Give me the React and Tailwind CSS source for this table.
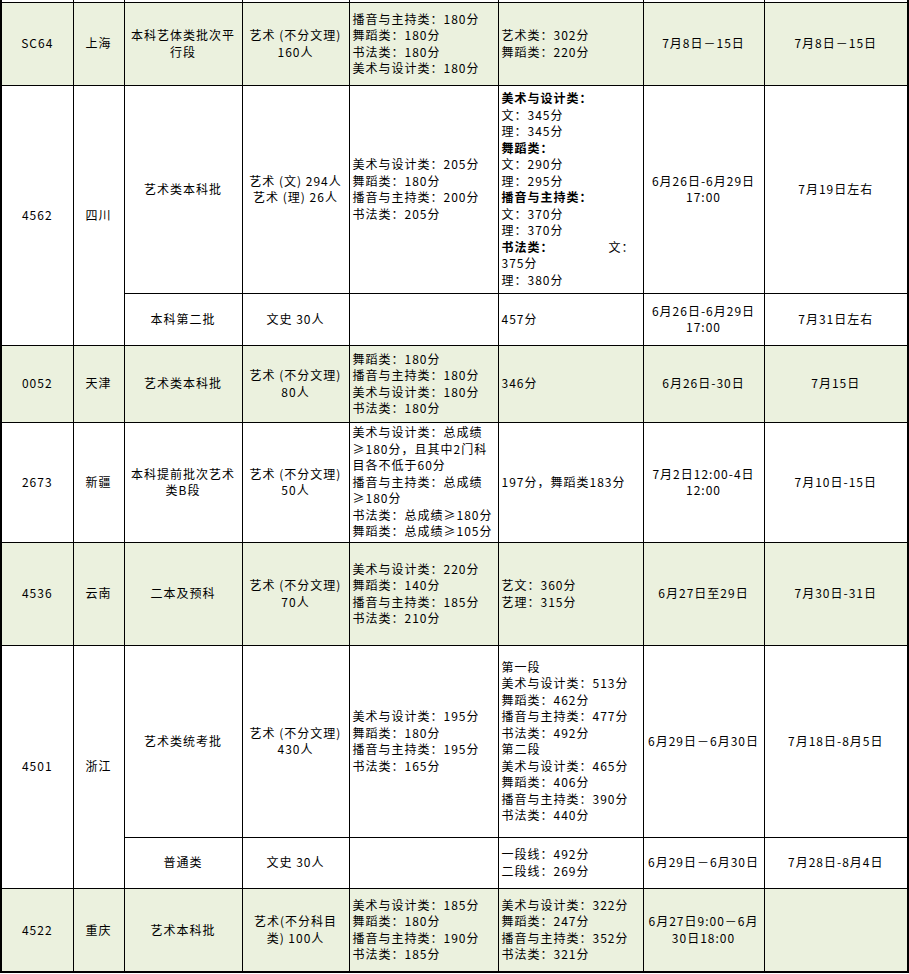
import React from 'react';

const GREEN = 'bg-[#ebf1de]';

const B = ({ children }) => <span className="font-bold">{children}</span>;

function Lines({ items }) {
  return (
    <>
      {items.map((t, i) => (
        <div key={i}>{t}</div>
      ))}
    </>
  );
}

const cell = 'border border-black p-0 overflow-hidden';
const center = `${cell} text-center`;
const left = `${cell} text-left pl-[3px] pr-[2px]`;

export default function App() {
  return (
    <div className="w-[909px] h-[974px] bg-white overflow-hidden font-['Noto_Sans_CJK_SC',sans-serif] text-[12px] leading-[16.5px] tracking-[1px] text-black">
      <table className="table-fixed border-collapse w-[907px]">
        <colgroup>
          <col className="w-[72px]" />
          <col className="w-[51px]" />
          <col className="w-[118px]" />
          <col className="w-[107px]" />
          <col className="w-[149px]" />
          <col className="w-[145px]" />
          <col className="w-[121px]" />
          <col className="w-[144px]" />
        </colgroup>
        <tbody>
          {/* sliver of the row above */}
          <tr className="h-[2px]">
            <td className="border-x border-x-black border-l-2 p-0" />
            <td className="border-x border-black p-0" />
            <td className="border-x border-black p-0" />
            <td className="border-x border-black p-0" />
            <td className="border-x border-black p-0" />
            <td className="border-x border-black p-0" />
            <td className="border-x border-black p-0" />
            <td className="border-x border-black border-r-2 p-0" />
          </tr>

          {/* 上海 */}
          <tr className={`h-[83px] ${GREEN}`}>
            <td className={`${center} border-l-2`}>SC64</td>
            <td className={center}>上海</td>
            <td className={center}>本科艺体类批次平<br />行段</td>
            <td className={center}>艺术 (不分文理)<br />160人</td>
            <td className={left}>
              <Lines items={['播音与主持类：180分', '舞蹈类：180分', '书法类：180分', '美术与设计类：180分']} />
            </td>
            <td className={left}>
              <Lines items={['艺术类：302分', '舞蹈类：220分']} />
            </td>
            <td className={center}>7月8日－15日</td>
            <td className={`${center} border-r-2`}>7月8日－15日</td>
          </tr>

          {/* 四川 */}
          <tr className="h-[208px]">
            <td rowSpan={2} className={`${center} border-l-2`}>4562</td>
            <td rowSpan={2} className={center}>四川</td>
            <td className={center}>艺术类本科批</td>
            <td className={center}>艺术 (文) 294人<br />艺术 (理) 26人</td>
            <td className={left}>
              <Lines items={['美术与设计类：205分', '舞蹈类：180分', '播音与主持类：200分', '书法类：205分']} />
            </td>
            <td className={left}>
              <div><B>美术与设计类：</B></div>
              <div>文：345分</div>
              <div>理：345分</div>
              <div><B>舞蹈类：</B></div>
              <div>文：290分</div>
              <div>理：295分</div>
              <div><B>播音与主持类：</B></div>
              <div>文：370分</div>
              <div>理：370分</div>
              <div className="flex justify-between pr-[6px]">
                <B>书法类：</B>
                <span>文：</span>
              </div>
              <div>375分</div>
              <div>理：380分</div>
            </td>
            <td className={center}>6月26日-6月29日<br />17:00</td>
            <td className={`${center} border-r-2`}>7月19日左右</td>
          </tr>
          <tr className="h-[52px]">
            <td className={center}>本科第二批</td>
            <td className={center}>文史 30人</td>
            <td className={left} />
            <td className={left}>457分</td>
            <td className={center}>6月26日-6月29日<br />17:00</td>
            <td className={`${center} border-r-2`}>7月31日左右</td>
          </tr>

          {/* 天津 */}
          <tr className={`h-[77px] ${GREEN}`}>
            <td className={`${center} border-l-2`}>0052</td>
            <td className={center}>天津</td>
            <td className={center}>艺术类本科批</td>
            <td className={center}>艺术 (不分文理)<br />80人</td>
            <td className={left}>
              <Lines items={['舞蹈类：180分', '播音与主持类：180分', '美术与设计类：180分', '书法类：180分']} />
            </td>
            <td className={left}>346分</td>
            <td className={center}>6月26日-30日</td>
            <td className={`${center} border-r-2`}>7月15日</td>
          </tr>

          {/* 新疆 */}
          <tr className="h-[120px]">
            <td className={`${center} border-l-2`}>2673</td>
            <td className={center}>新疆</td>
            <td className={center}>本科提前批次艺术<br />类B段</td>
            <td className={center}>艺术 (不分文理)<br />50人</td>
            <td className={`${left} whitespace-nowrap`}>
              <Lines
                items={[
                  '美术与设计类：总成绩',
                  '≥180分，且其中2门科',
                  '目各不低于60分',
                  '播音与主持类：总成绩',
                  '≥180分',
                  '书法类：总成绩≥180分',
                  '舞蹈类：总成绩≥105分',
                ]}
              />
            </td>
            <td className={left}>197分，舞蹈类183分</td>
            <td className={center}>7月2日12:00-4日<br />12:00</td>
            <td className={`${center} border-r-2`}>7月10日-15日</td>
          </tr>

          {/* 云南 */}
          <tr className={`h-[103px] ${GREEN}`}>
            <td className={`${center} border-l-2`}>4536</td>
            <td className={center}>云南</td>
            <td className={center}>二本及预科</td>
            <td className={center}>艺术 (不分文理)<br />70人</td>
            <td className={left}>
              <Lines items={['美术与设计类：220分', '舞蹈类：140分', '播音与主持类：185分', '书法类：210分']} />
            </td>
            <td className={left}>
              <Lines items={['艺文：360分', '艺理：315分']} />
            </td>
            <td className={center}>6月27日至29日</td>
            <td className={`${center} border-r-2`}>7月30日-31日</td>
          </tr>

          {/* 浙江 */}
          <tr className="h-[192px]">
            <td rowSpan={2} className={`${center} border-l-2`}>4501</td>
            <td rowSpan={2} className={center}>浙江</td>
            <td className={center}>艺术类统考批</td>
            <td className={center}>艺术 (不分文理)<br />430人</td>
            <td className={left}>
              <Lines items={['美术与设计类：195分', '舞蹈类：180分', '播音与主持类：195分', '书法类：165分']} />
            </td>
            <td className={left}>
              <Lines
                items={[
                  '第一段',
                  '美术与设计类：513分',
                  '舞蹈类：462分',
                  '播音与主持类：477分',
                  '书法类：492分',
                  '第二段',
                  '美术与设计类：465分',
                  '舞蹈类：406分',
                  '播音与主持类：390分',
                  '书法类：440分',
                ]}
              />
            </td>
            <td className={center}>6月29日－6月30日</td>
            <td className={`${center} border-r-2`}>7月18日-8月5日</td>
          </tr>
          <tr className="h-[51px]">
            <td className={center}>普通类</td>
            <td className={center}>文史 30人</td>
            <td className={left} />
            <td className={left}>
              <Lines items={['一段线：492分', '二段线：269分']} />
            </td>
            <td className={center}>6月29日－6月30日</td>
            <td className={`${center} border-r-2`}>7月28日-8月4日</td>
          </tr>

          {/* 重庆 */}
          <tr className={`h-[84px] ${GREEN}`}>
            <td className={`${center} border-l-2 border-b-2`}>4522</td>
            <td className={`${center} border-b-2`}>重庆</td>
            <td className={`${center} border-b-2`}>艺术本科批</td>
            <td className={`${center} border-b-2`}>艺术(不分科目<br />类) 100人</td>
            <td className={`${left} border-b-2`}>
              <Lines items={['美术与设计类：185分', '舞蹈类：180分', '播音与主持类：190分', '书法类：185分']} />
            </td>
            <td className={`${left} border-b-2`}>
              <Lines items={['美术与设计类：322分', '舞蹈类：247分', '播音与主持类：352分', '书法类：321分']} />
            </td>
            <td className={`${center} border-b-2`}>6月27日9:00－6月<br />30日18:00</td>
            <td className={`${center} border-r-2 border-b-2`} />
          </tr>
        </tbody>
      </table>
    </div>
  );
}
